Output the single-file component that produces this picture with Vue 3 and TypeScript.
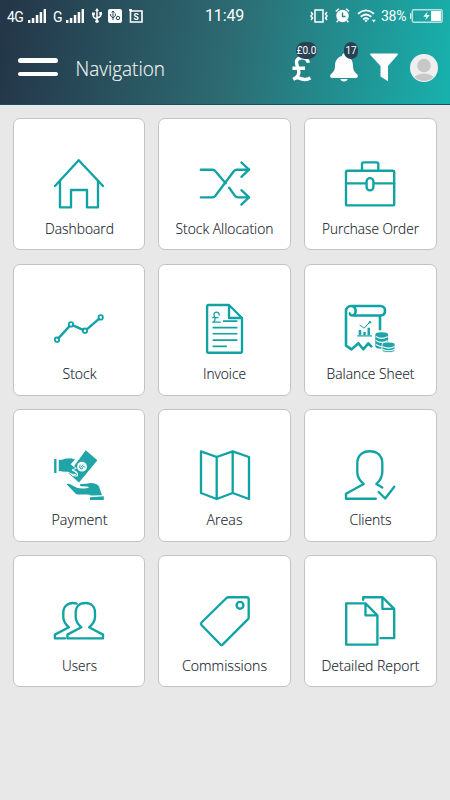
<script setup lang="ts">
interface Tile {
  label: string
  width: number
  strokes?: string[]
  icon?: 'stock' | 'invoice' | 'balance' | 'payment' | 'tag'
}

const tiles: Tile[] = [
  { label: 'Dashboard', width: 69, strokes: ['M1 27 24.7 1.2 49 27', 'M6 22V48.3H17V31H33V48.3H44V22'] },
  {
    label: 'Stock Allocation',
    width: 98,
    strokes: [
      'M.8 10.7H12.5Q14.2 10.7 15.2 12L25.6 24.3',
      'M.8 38.3H12.5Q14.2 38.3 15.2 37L34 12Q35 10.7 36.8 10.7H49',
      'M29.2 28.8 34.8 36.6Q36 38.3 38 38.3H49',
      'M41.4 3.5 49 10.7 41.4 17.8M41.4 31.2 49 38.3 41.4 45.6',
    ],
  },
  {
    label: 'Purchase Order',
    width: 97,
    strokes: [
      'M2.5 11.7H47.8Q49.2 11.7 49.2 13.1V44.9Q49.2 46.3 47.8 46.3H2.5Q1 46.3 1 44.9V13.1Q1 11.7 2.5 11.7Z',
      'M17 11.5V5Q17 3.3 18.7 3.3H31.6Q33.3 3.3 33.3 5V11.5',
      'M1 24.4H21.5M28.5 24.4H49.2M21.6 22.5A3.4 3.4 0 0 1 28.4 22.5V28A3.4 3.4 0 0 1 21.6 28Z',
    ],
  },
  { label: 'Stock', width: 34, icon: 'stock' },
  { label: 'Invoice', width: 43, icon: 'invoice' },
  { label: 'Balance Sheet', width: 88, icon: 'balance' },
  { label: 'Payment', width: 56, icon: 'payment' },
  { label: 'Areas', width: 36, strokes: ['M1 1.3 16.7 7 32.7 1.3 49 7V49L32.7 43 16.7 49 1 43ZM16.7 7V49M32.7 1.3V43'] },
  {
    label: 'Clients',
    width: 42,
    strokes: [
      'M30.8 48.7H1V43.7L18.7 34C14.5 30.5 12.3 27.5 12.3 22V13C12.3 5.5 17.5 1.2 24.8 1.2S37.3 5.5 37.3 13V22C37.3 27.5 35.2 30.5 31.3 34L37.3 37.4',
      'M33.6 42 40.2 48.5 49.3 36.7',
    ],
  },
  {
    label: 'Users',
    width: 35,
    strokes: [
      'M27.4 31.3C23.5 28 21.7 25 21.7 21V16.5C21.7 10.6 25.5 7 31.3 7S41 10.6 41 16.5V21C41 25 39.2 28 35.1 31.3L49 38.6V42.3H13.4V38.6Z',
      'M22.7 7.6C14.8 5.3 9.3 10 9.3 16.5V21C9.3 25 11 28 14.9 31.3L.9 38.6V42.3H11',
    ],
  },
  { label: 'Commissions', width: 85, icon: 'tag' },
  {
    label: 'Detailed Report',
    width: 98,
    strokes: [
      'M1.2 7.3H20.5L32.4 19.3V48.6H1.2ZM20.5 7.3V19.3H32.4',
      'M18.2 3.7V1.2H37.4L49.2 12.8V42.1H35.5M37.4 1.2V12.8H49.2',
    ],
  },
]
</script>

<template>
  <main class="screen">
    <header class="header">
      <div class="status">
        <span class="network">4G</span>
        <svg class="signal" viewBox="0 0 18 14"><path d="M0 11h2.4v3H0zM3.8 9h2.5v5H3.8zM7.8 6h2.5v8H7.8zM11.7 3h2.5v11h-2.5zM15.6 0H18v14h-2.4z" /></svg>
        <span class="network second">G</span>
        <svg class="signal" viewBox="0 0 18 14"><path d="M0 11h2.4v3H0zM3.8 9h2.5v5H3.8zM7.8 6h2.5v8H7.8zM11.7 3h2.5v11h-2.5zM15.6 0H18v14h-2.4z" /></svg>
        <svg class="usb" viewBox="0 0 10 15">
          <path d="M5 2v11M1.3 6v2.2Q1.3 9.5 5 11M8.7 5v2.2Q8.7 8.8 5 10" fill="none" stroke="#fff" stroke-width="1.5" />
          <path d="m5 0 2 3H3zM0 4.6h2.8v2.6H0zM7.3 4H10v2.7H7.3z" /><circle cx="5" cy="13.3" r="1.7" />
        </svg>
        <svg class="app-badge" viewBox="0 0 14 14">
          <rect width="14" height="14" rx="2" />
          <path d="M5 2v9M2.7 5v2L5 9l2.3-2V4.5M3.7 3.5 5 2l1.3 1.5" fill="none" stroke="#294d5d" />
          <circle cx="10" cy="9" r="1.7" fill="none" stroke="#294d5d" />
        </svg>
        <svg class="app-badge last" viewBox="0 0 14 14">
          <path d="M0 1h3M1.5 0v13H13V2H1.5" fill="none" stroke="#fff" stroke-width="1.6" />
          <text x="7.2" y="10.5" font-size="8.5" font-weight="700" text-anchor="middle">S</text>
        </svg>
        <time class="time">11:49</time>
        <svg class="vibrate" viewBox="0 0 18 14">
          <path d="M5 1h8v12H5zM1 3l1.5 2L1 7l1.5 2L1 11M17 3l-1.5 2L17 7l-1.5 2 1.5 2" fill="none" stroke="#fff" stroke-width="1.5" />
        </svg>
        <svg class="alarm" viewBox="0 0 15 15">
          <circle cx="7.5" cy="8" r="6.2" />
          <path d="M.8 3.4 3.9.8M14.2 3.4 11.1.8M3 12.5l-1.3 1.7M12 12.5l1.3 1.7" stroke="#fff" stroke-width="1.4" />
          <path d="M7.5 4.5V8.5h3" fill="none" stroke="#26868a" stroke-width="1.4" />
        </svg>
        <svg class="wifi" viewBox="0 0 19 14">
          <path d="M1 4.8Q9 -2 17 4.8M3.7 7.8Q9 3.2 14.3 7.8M6.2 10.4Q9 8 11.8 10.4" fill="none" stroke="#fff" stroke-width="1.8" />
          <path d="m7.3 11.4 1.7 1.8 1.7-1.8Q9 10.4 7.3 11.4zM14.8 10.8h4l-2 2.8z" />
        </svg>
        <span class="percent">38%</span>
        <svg class="battery" viewBox="0 0 33 14">
          <rect x="2.3" y=".8" width="29.8" height="12.4" rx="1.5" fill="none" stroke="#b9e1df" stroke-width="1.5" />
          <path d="M1.2 4.3H0v5.4h1.2zM21 2h10v10H21zM17.6 2.8l-4.3 5h3l-1 3.5 4.5-5.2h-3.1z" />
        </svg>
      </div>

      <nav class="appbar">
        <button class="menu" aria-label="Menu"><i></i><i></i></button>
        <svg class="title" viewBox="0 0 100 30"><text x=".5" y="22.5" textLength="89.5" lengthAdjust="spacingAndGlyphs">Navigation</text></svg>
        <div class="action pound">
          <svg viewBox="0 0 20 27">
            <path d="M16.3 7.8C15.5 1.2 4.3 1 4.5 7.5 4.6 11 7.5 14 6.7 18.5Q6 22 1.3 24.3 5 21.8 8.8 23.6 14 25.8 18.4 22.8M.5 13.3H13" fill="none" stroke="#fff" stroke-width="3.4" />
          </svg>
          <span class="badge">£0.0</span>
        </div>
        <div class="action bell">
          <svg viewBox="0 0 28 29">
            <path d="M14 .3Q16 .3 16 3C21 4.2 23 8.2 23 13 23 18 25.2 19.2 27.3 21.5 28.5 23 27.7 25 26 25H2C.3 25-.5 23 .7 21.5 2.8 19.2 5 18 5 13 5 8.2 7 4.2 12 3Q12 .3 14 .3ZM10.2 26h7.6Q16.8 28.5 14 28.5T10.2 26Z" />
          </svg>
          <span class="badge small">17</span>
        </div>
        <svg class="filter" viewBox="0 0 28 29"><path d="M1 .4H27Q28.6.6 27.4 2.3L18 13V28.3L10.5 23.6V13L.6 2.3Q-.5.6 1 .4Z" /></svg>
        <svg class="avatar" viewBox="0 0 28 28">
          <defs><clipPath id="avatar-clip"><circle cx="14" cy="14" r="13" /></clipPath></defs>
          <circle cx="14" cy="14" r="14" fill="#efefef" />
          <g clip-path="url(#avatar-clip)" fill="#c8c8c8"><circle cx="14" cy="11.5" r="6.8" /><ellipse cx="14" cy="26" rx="10.5" ry="6.5" /></g>
        </svg>
      </nav>
    </header>

    <section class="grid">
      <article v-for="tile in tiles" :key="tile.label" class="tile">
        <svg class="icon" viewBox="0 0 50 50">
          <path v-for="(d, i) in tile.strokes" :key="i" :d="d" />

          <template v-if="tile.icon === 'stock'">
            <path d="m4.6 34.1 10.9-12M19 21.4l10 4.4M32.8 25.3 45 14.8" />
            <g stroke-width="1.8"><circle cx="3" cy="35.7" r="2.2" /><circle cx="17" cy="20.4" r="2.2" /><circle cx="31" cy="26.7" r="2.2" /><circle cx="46.7" cy="13.4" r="2.2" /></g>
          </template>

          <template v-else-if="tile.icon === 'invoice'">
            <path d="M8.5 1H29L42 14V47.2Q42 48.7 40.5 48.7H8.5Q7.1 48.7 7.1 47.2V2.4Q7.1 1 8.5 1ZM29 1V14H42" />
            <path d="M23 17.1H37.4M12.6 23.6H37.4M12.6 29.8H37.4M12.6 36.1H37.4M12.6 42.4H26.8" stroke-width="1.6" stroke-linecap="butt" />
            <path d="M19.3 11C18.8 7.3 14 7.3 14 10.8 14 13 16 14.5 14.8 16.5Q14.3 17.7 12.8 18.2H20.3M12.8 13.7H18" stroke-width="1.3" />
          </template>

          <template v-else-if="tile.icon === 'balance'">
            <path d="M6.2 2H36A4.7 4.8 0 0 1 36 11.5H8.2M1 7A5 5 0 0 1 6.2 2C12 2 12 11.5 7 11.5 5 11.5 4.5 9.7 5.4 8.6M1 7V41.7L6.5 45.4 13.4 39.2 18.3 45.3 23.3 39.4 27 43.2M35 12V26.2" stroke-linecap="butt" stroke-width="2.6" />
            <path d="M12.2 31.9H27" stroke-width="1.2" stroke-linecap="butt" />
            <path class="solid" d="M13.7 26h2.6v5.3h-2.6zM18.3 28h2.5v3.3h-2.5zM22.5 23.8h2.5v7.5h-2.5z" />
            <path d="m15 21.3 4.1 2.9 5.2-5.5" stroke-width="1" /><circle class="solid" cx="24.9" cy="18.2" r="1.3" />
            <path class="solid" d="M30.3 30.7Q30.3 28.3 36.7 28.3T43.1 30.7V42.2Q40 44.7 36.7 44.7 30.3 44.7 30.3 42.2Z" />
            <path class="white-line" d="M31.3 32.8Q36.5 36 42.3 32.8M31.3 36.8Q36.5 40 42.3 36.8M31.3 40.8Q36.5 43.8 39 42.5" />
            <path class="solid coin-edge" d="M37 40.5Q37 38 43.6 38T50 40.5V46Q50 48.5 43.5 48.5T37 46Z" />
            <path class="white-line" d="M37.9 42.8Q43.6 45.5 49.2 42.8M37.9 45.4Q43.6 48 49.2 45.4" />
          </template>

          <template v-else-if="tile.icon === 'payment'">
            <path class="solid" d="m31.7.3 11.7 10L25 32.4 14.7 23.6Z" />
            <path class="solid hand-edge" d="M4.5 9.6Q8 9.6 12 8.1 18 7.2 21.5 9.3L17.2 14.3 22.3 18.3 18 19.9Q23.5 22.5 22 24.5 18 25 14.2 22.3 9.5 22.3 4.5 21.5Z" />
            <path class="solid" d="M.1 9H2.5V23H.1Z" />
            <path d="M18.4 20.3Q24.3 21.8 23.5 25.5 21 27 17.2 24.3" class="white-line" />
            <circle cx="28" cy="16.7" r="4.9" fill="#fff" stroke="none" />
            <path d="M26 15Q24.6 18 27 19 28.8 19.5 28.8 17.3 28.7 15.3 31 17M26.8 17.5 29 14.8" stroke-width=".9" />
            <path class="solid" d="M12.6 34.3Q13.2 33.3 16.3 34.2L22.8 37.7Q27 39.2 34 37.9 36 36.8 33 36.5L27.5 36.3Q25 35.6 26.5 34 32 34.2 36.5 33 43.3 33 45 36.5L48 45.2 37 45.5Q36 44.5 33 44.5H23.5Q21.8 44.3 21 42.9Z" />
            <path class="solid" d="m36 47.3 13.8-1V50H36Z" />
          </template>

          <template v-else-if="tile.icon === 'tag'">
            <path d="M28.5 1.2H46.5Q48.7 1.2 48.7 3.4V21.5Q48.7 22.5 48 23.2L22.8 48.3Q21.5 49.5 20.2 48.3L1.5 29Q.4 27.7 1.5 26.5L26.5 2Q27.4 1.2 28.5 1.2Z" /><circle cx="40" cy="9.3" r="3.4" />
          </template>
        </svg>
        <svg class="label" viewBox="0 0 131 26">
          <text :x="(131 - tile.width) / 2" y="18" :textLength="tile.width" lengthAdjust="spacingAndGlyphs">{{ tile.label }}</text>
        </svg>
      </article>
    </section>
  </main>
</template>

<style>
body { margin: 0; background: #e8e8e8; }
</style>

<style scoped>
.screen { width: 450px; height: 800px; overflow: hidden; background: #e8e8e8; font-family: "Open Sans", sans-serif; }
.header { box-sizing: border-box; height: 105px; background: linear-gradient(98deg, #243749 2%, #2d6970 49%, #18b0ac 99%); border-bottom: 1px solid #17515c; color: #fff; }
.header svg { display: block; flex: none; fill: #fff; }
.status { display: flex; align-items: center; height: 31px; box-sizing: border-box; padding-left: 7px; font: 14px/16px Roboto, sans-serif; }
.network { width: 21px; font-size: 14px; letter-spacing: -.5px; padding-top: 3px; box-sizing: border-box; }
.network.second { width: 13px; margin-left: 7px; }
.signal { width: 18px; height: 14px; }
.usb { width: 10px; height: 15px; margin-left: 8px; }
.app-badge { width: 14px; height: 14px; margin-left: 6px; }
.app-badge.last { margin-left: 7px; }
.time { width: 105px; margin-left: 62px; font-size: 16px; letter-spacing: -.15px; padding-top: 1px; }
.vibrate { width: 18px; height: 14px; }
.alarm { width: 15px; height: 15px; margin-left: 7px; }
.wifi { width: 19px; height: 14px; margin-left: 7px; }
.percent { width: 29px; margin-left: 5px; font-size: 14px; letter-spacing: -.25px; padding-top: 1px; }
.battery { width: 33px; height: 14px; }
.appbar { display: flex; align-items: flex-start; padding: 22px 0 0 17.5px; }
.menu { display: flex; flex-direction: column; gap: 9px; width: 40px; margin-top: 5px; padding: 0; border: 0; background: none; }
.menu i { display: block; height: 4.6px; width: 40px; border-radius: 3px; background: #fff; }
.title { width: 100px; height: 30px; margin-left: 17.5px; font-size: 20px; font-weight: 300; }
.title text { fill: #f2f5f5; stroke: #f2f5f5; stroke-width: .15px; }
.action { position: relative; }
.pound { width: 20px; margin: 2px 0 0 117px; }
.pound svg { width: 20px; height: 27px; }
.bell { width: 28px; margin-left: 18px; }
.bell svg { width: 28px; height: 29px; }
.badge { position: absolute; top: -13px; left: 4px; box-sizing: border-box; width: 21px; height: 17px; border-radius: 8.5px; background: #294253; font: 10px/18px Roboto, sans-serif; text-align: center; }
.badge.small { top: -11px; left: 14px; width: 14px; }
.filter { width: 28px; height: 29px; margin-left: 12px; }
.avatar { width: 28px; height: 28px; margin: 1px 0 0 12px; }
.grid { display: grid; grid-template-columns: repeat(3, 132.9px); grid-auto-rows: 132.4px; gap: 13.3px 12.7px; padding: 13px 12.6px; }
.tile { box-sizing: border-box; display: flex; flex-direction: column; align-items: center; padding-top: 39.8px; border: 1.4px solid #c3c3c3; border-radius: 7px; background: #fff; }
.icon { display: block; width: 50px; height: 50px; overflow: visible; fill: none; stroke: #11a3a4; stroke-width: 2.35; stroke-linecap: round; stroke-linejoin: round; }
.icon .solid { fill: #20a4a7; stroke: none; }
.icon .coin-edge, .icon .hand-edge { stroke: #fff; stroke-width: .9; }
.icon .white-line { fill: none; stroke: #fff; stroke-width: 1.1; }
.label { display: block; width: 131px; height: 26px; margin-top: 7px; font-size: 15px; font-weight: 300; }
.label text { fill: #151b2c; stroke: #151b2c; stroke-width: .15px; }
</style>
